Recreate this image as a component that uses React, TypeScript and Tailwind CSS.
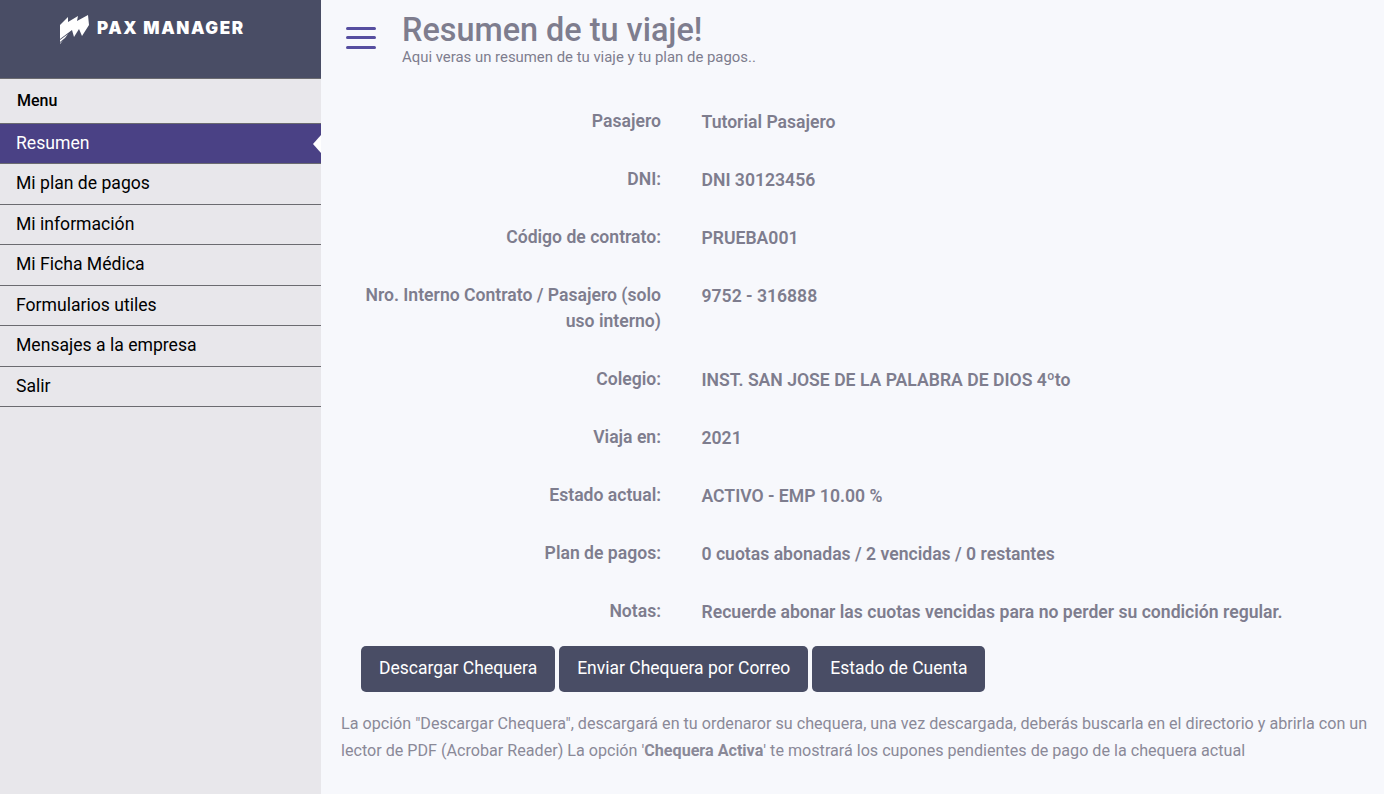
const rows: [string, string][] = [
  ['Pasajero', 'Tutorial Pasajero'],
  ['DNI:', 'DNI 30123456'],
  ['Código de contrato:', 'PRUEBA001'],
  ['Nro. Interno Contrato / Pasajero (solo uso interno)', '9752 - 316888'],
  ['Colegio:', 'INST. SAN JOSE DE LA PALABRA DE DIOS 4ºto'],
  ['Viaja en:', '2021'],
  ['Estado actual:', 'ACTIVO - EMP 10.00 %'],
  ['Plan de pagos:', '0 cuotas abonadas / 2 vencidas / 0 restantes'],
  ['Notas:', 'Recuerde abonar las cuotas vencidas para no perder su condición regular.'],
];

const menu = ['Mi plan de pagos', 'Mi información', 'Mi Ficha Médica', 'Formularios utiles', 'Mensajes a la empresa', 'Salir'];
const buttons = ['Descargar Chequera', 'Enviar Chequera por Correo', 'Estado de Cuenta'];

function Logo() {
  return (
    <svg width="30" height="29" viewBox="0 0 30 29" className="shrink-0">
      <path
        fill="#fff"
        d="M0 10 L8 2 L8 7 L18 1 L17 6 L28 0 L29 10 L22 21 L19 14 L14 22 L12 15 L0 24 Z M0 25 L8 19 L5 23 L0 27 Z M0 28 L3 25.5 L0 29 Z"
      />
    </svg>
  );
}

function App() {
  return (
    <div className="flex min-h-[794px] bg-[#f7f8fc] font-['Roboto',sans-serif]">
      <aside className="w-[321px] shrink-0 bg-[#e8e7eb]">
        <div className="flex h-[79px] gap-[7px] border-b border-[#6b6b70] bg-[#494d65] pt-[15px] pl-[60px]">
          <Logo />
          <span className="mt-[3px] font-['Inter',sans-serif] text-[17px] leading-[20px] font-black tracking-[1.6px] text-white">
            PAX MANAGER
          </span>
        </div>
        <div className="h-[45px] border-b border-[#6b6b70] pt-[12px] pl-[17px] text-[16px] leading-[19px] font-medium text-black">
          Menu
        </div>
        <div className="relative h-[40px] border-b border-[#6b6b70] bg-[#4a4185] pt-[8px] pl-[16px] text-[17.6px] leading-[22px] text-white">
          Resumen
          <span className="absolute top-[11px] right-0 border-y-[9px] border-r-[8px] border-y-transparent border-r-white" />
        </div>
        {menu.map(item => (
          <div
            key={item}
            className="h-[40.5px] border-b border-[#6b6b70] pt-[8px] pl-[16px] text-[17.6px] leading-[22px] text-black"
          >
            {item}
          </div>
        ))}
      </aside>

      <main className="min-w-0 flex-1 px-[20px]">
        <header className="flex h-[68px]">
          <div className="mt-[27px] ml-[5px] flex w-[30px] flex-col">
            <span className="mb-[6px] h-[3px] rounded-full bg-[#564ea0]" />
            <span className="mb-[7px] h-[3px] rounded-full bg-[#564ea0]" />
            <span className="h-[3px] rounded-full bg-[#564ea0]" />
          </div>
          <div className="ml-[26px]">
            <h1 className="mt-[11px] text-[32.4px] leading-[38px] font-medium text-[#7e7d8e]">Resumen de tu viaje!</h1>
            <p className="text-[14.9px] leading-[17px] text-[#7e7d8e]">Aqui veras un resumen de tu viaje y tu plan de pagos..</p>
          </div>
        </header>

        <div className="mt-[41px] text-[17.6px] leading-[26px] font-semibold text-[#7e7d8e]">
          {rows.map(([label, value]) => (
            <div key={label} className="mb-[32px] flex last:mb-[21px]">
              <div className="w-[320px] -translate-y-px pl-[20px] text-right">{label}</div>
              <div className="flex-1 pl-[40.5px]">{value}</div>
            </div>
          ))}
        </div>

        <div className="flex gap-[4px] pl-[20px]">
          {buttons.map(label => (
            <button
              key={label}
              type="button"
              className="h-[46px] rounded-[5px] bg-[#494d65] px-[18px] pb-[2px] text-[17.5px] text-white"
            >
              {label}
            </button>
          ))}
        </div>

        <p className="mt-[18px] -mr-[10px] text-[16.14px] leading-[27px] text-[#8a8998]">
          La opción "Descargar Chequera", descargará en tu ordenaror su chequera, una vez descargada, deberás buscarla en el directorio y abrirla con un lector de PDF (Acrobar Reader) La opción '<b className="font-bold">Chequera Activa</b>' te mostrará los cupones pendientes de pago de la chequera actual
        </p>
      </main>
    </div>
  );
}

export default App;
